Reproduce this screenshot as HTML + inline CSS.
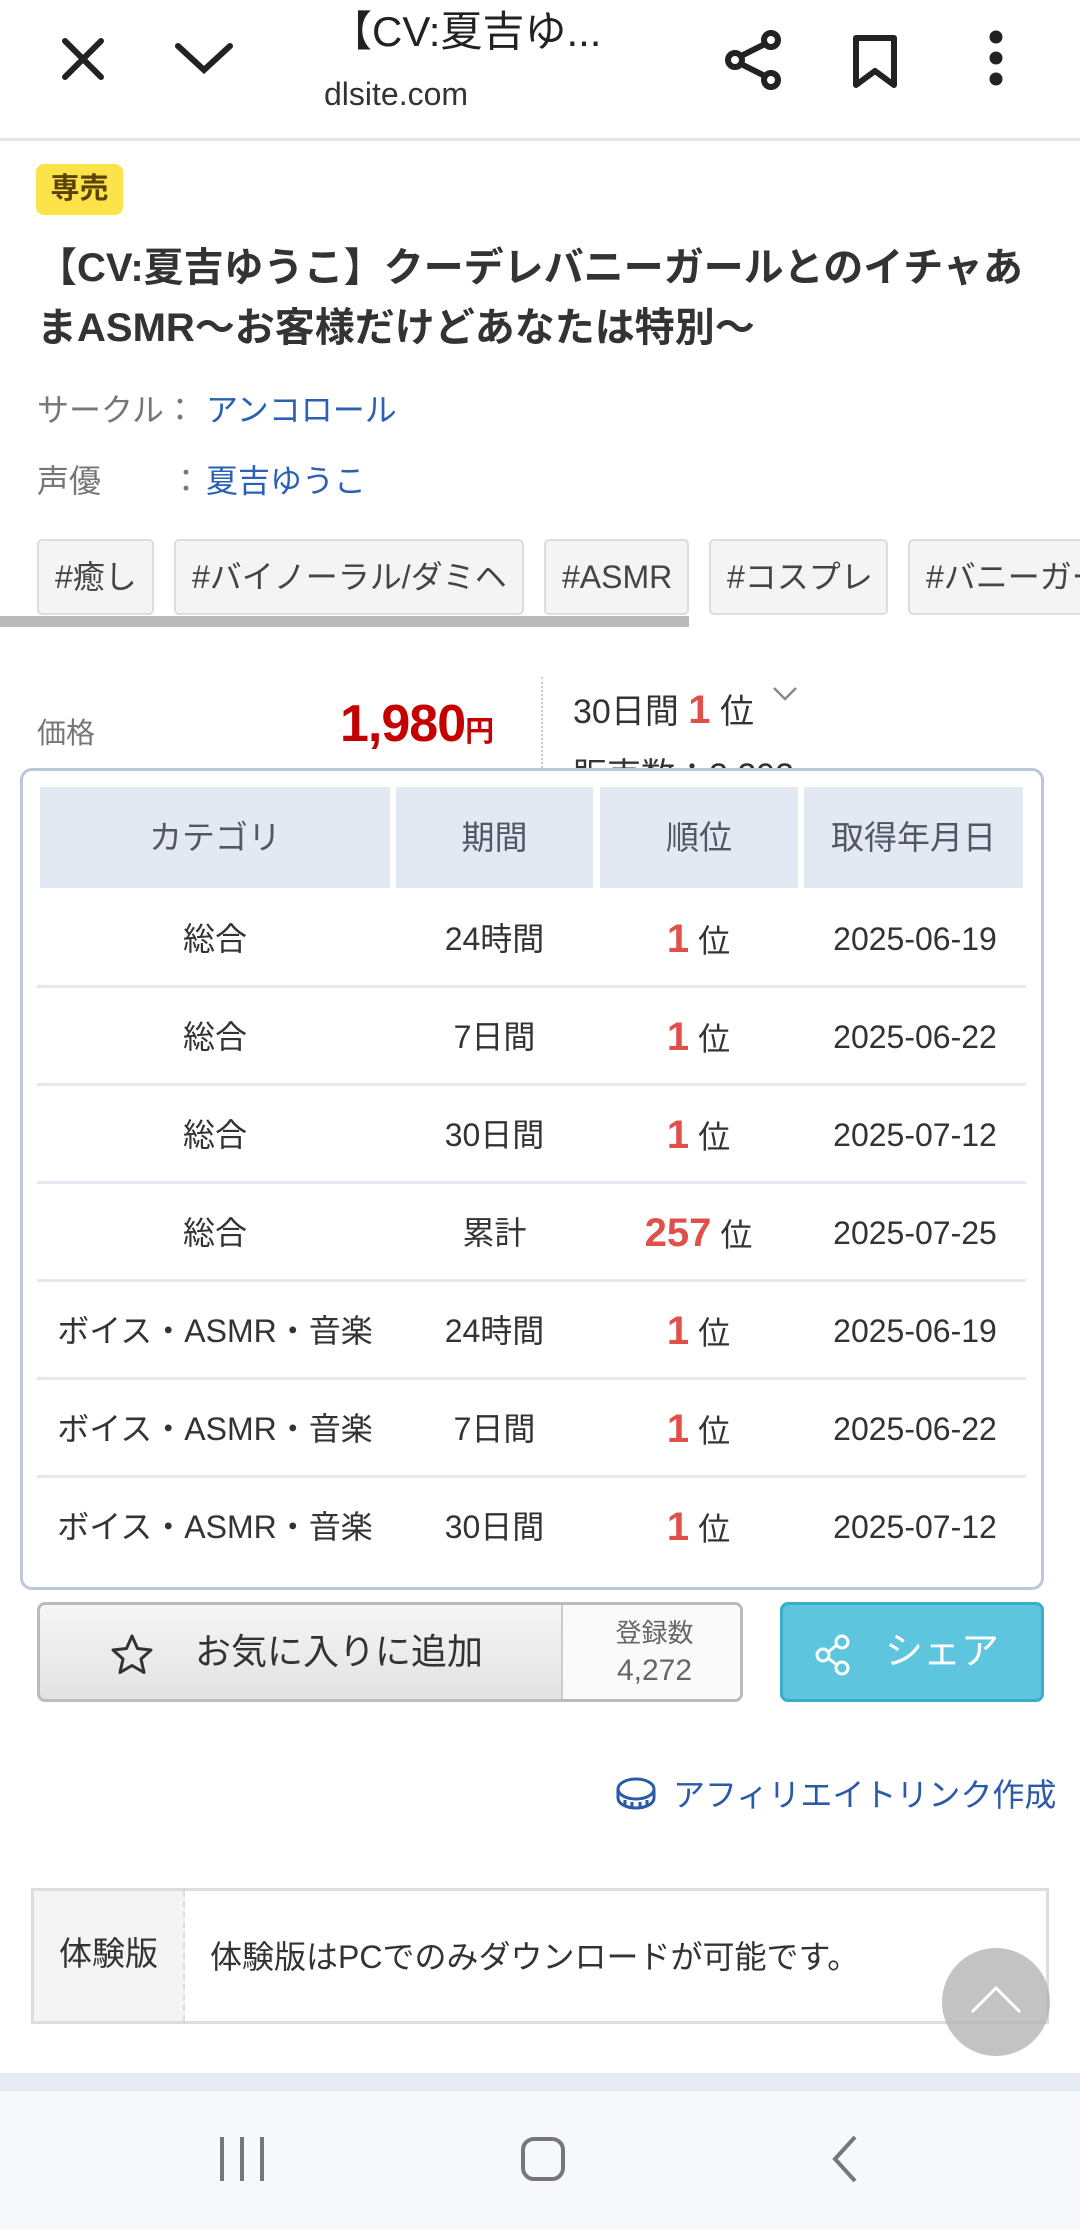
<!DOCTYPE html>
<html><head><meta charset="utf-8"><style>
*{margin:0;padding:0;box-sizing:border-box}
body{width:1080px;height:2230px;position:relative;background:#fff;font-family:"Liberation Sans","Noto Sans CJK JP",sans-serif;color:#333;overflow:hidden}
.a{position:absolute}
.tag{position:absolute;top:539px;height:76px;background:#f4f4f4;border:2px solid #ddd;border-radius:5px;font-size:32px;color:#444;line-height:72px;padding-left:16px;white-space:nowrap;overflow:hidden}
.row{position:absolute;left:37px;width:989px;height:98px;border-bottom:3px solid #e4e8f0;font-size:32px;color:#333}
.row div{position:absolute;top:0;line-height:98px;text-align:center;white-space:nowrap}
.c1{left:0;width:356px}.c2{left:359px;width:197px}.c3{left:562px;width:199px}.c4{left:767px;width:222px}
.r{color:#e0504a;font-weight:bold;font-size:40px}
.hd{position:absolute;top:787px;height:101px;background:#e3e9f3;color:#556;font-size:33px;line-height:101px;text-align:center}
</style></head><body>
<svg class="a" style="left:60px;top:36px" width="46" height="46" viewBox="0 0 46 46"><path d="M5 5L41 41M41 5L5 41" stroke="#222" stroke-width="6" stroke-linecap="round"/></svg>
<svg class="a" style="left:174px;top:40px" width="60" height="36" viewBox="0 0 60 36"><path d="M4 6L30 30L56 6" stroke="#222" stroke-width="6" fill="none" stroke-linecap="round"/></svg>
<div class="a" style="left:330px;top:6px;font-size:42px;color:#222;line-height:52px">【CV:夏吉ゆ...</div>
<div class="a" style="left:324px;top:74px;font-size:32px;color:#333;line-height:40px">dlsite.com</div>
<svg class="a" style="left:722px;top:28px" width="64" height="64" viewBox="0 0 64 64"><g stroke="#222" stroke-width="6" fill="none"><circle cx="49" cy="12" r="7"/><circle cx="13" cy="32" r="7"/><circle cx="49" cy="52" r="7"/><path d="M19 28L43 16M19 36L43 48"/></g></svg>
<svg class="a" style="left:851px;top:34px" width="48" height="56" viewBox="0 0 48 56"><path d="M5 4H43V51L24 37L5 51Z" stroke="#222" stroke-width="6" fill="none" stroke-linejoin="round"/></svg>
<svg class="a" style="left:983px;top:28px" width="26" height="60" viewBox="0 0 26 60"><circle cx="13" cy="9" r="6.5" fill="#222"/><circle cx="13" cy="30" r="6.5" fill="#222"/><circle cx="13" cy="51" r="6.5" fill="#222"/></svg>
<div class="a" style="left:0;top:138px;width:1080px;height:3px;background:#e2e5ea"></div>
<div class="a" style="left:36px;top:164px;width:87px;height:51px;background:#fce34a;border-radius:8px;font-size:29px;font-weight:bold;color:#5a4300;text-align:center;line-height:51px">専売</div>
<div class="a" style="left:37px;top:238px;width:1005px;font-size:40px;font-weight:bold;color:#333;line-height:60px">【CV:夏吉ゆうこ】クーデレバニーガールとのイチャあまASMR～お客様だけどあなたは特別～</div>
<div class="a" style="left:37px;top:388px;font-size:32px;color:#777;line-height:44px">サークル：</div>
<div class="a" style="left:206px;top:388px;font-size:32px;color:#2a60b5;line-height:44px">アンコロール</div>
<div class="a" style="left:37px;top:459px;font-size:32px;color:#777;line-height:44px">声優</div>
<div class="a" style="left:170px;top:459px;font-size:32px;color:#777;line-height:44px">：</div>
<div class="a" style="left:206px;top:459px;font-size:32px;color:#2a60b5;line-height:44px">夏吉ゆうこ</div>
<div class="tag" style="left:37px;width:117px">#癒し</div>
<div class="tag" style="left:174px;width:350px">#バイノーラル/ダミヘ</div>
<div class="tag" style="left:544px;width:145px">#ASMR</div>
<div class="tag" style="left:709px;width:179px">#コスプレ</div>
<div class="tag" style="left:908px;width:200px">#バニーガール</div>
<div class="a" style="left:0;top:616px;width:689px;height:11px;background:#bbb"></div>
<div class="a" style="left:37px;top:710px;font-size:29px;color:#777">価格</div>
<div class="a" style="left:340px;top:694px;font-size:52px;font-weight:bold;color:#c40000;letter-spacing:-1px">1,980<span style="font-size:29px">円</span></div>
<div class="a" style="left:541px;top:677px;height:95px;border-left:2px dotted #ccc"></div>
<div class="a" style="left:573px;top:684px;font-size:34px;color:#333">30日間 <b style="color:#e0504a;font-size:40px">1</b> 位</div>
<svg class="a" style="left:772px;top:686px" width="26" height="16" viewBox="0 0 26 16"><path d="M2 2L13 13L24 2" stroke="#888" stroke-width="2.5" fill="none"/></svg>
<div class="a" style="left:573px;top:748px;font-size:34px;color:#333">販売数：2,292</div>
<div class="a" style="left:20px;top:768px;width:1024px;height:822px;background:#fff;border:3px solid #bcc6dc;border-radius:12px"></div>
<div class="hd" style="left:40px;width:350px">カテゴリ</div>
<div class="hd" style="left:396px;width:197px">期間</div>
<div class="hd" style="left:600px;width:198px">順位</div>
<div class="hd" style="left:804px;width:219px">取得年月日</div>
<div class="row" style="top:890px"><div class="c1">総合</div><div class="c2">24時間</div><div class="c3"><span class="r">1</span> 位</div><div class="c4">2025-06-19</div></div>
<div class="row" style="top:988px"><div class="c1">総合</div><div class="c2">7日間</div><div class="c3"><span class="r">1</span> 位</div><div class="c4">2025-06-22</div></div>
<div class="row" style="top:1086px"><div class="c1">総合</div><div class="c2">30日間</div><div class="c3"><span class="r">1</span> 位</div><div class="c4">2025-07-12</div></div>
<div class="row" style="top:1184px"><div class="c1">総合</div><div class="c2">累計</div><div class="c3"><span class="r">257</span> 位</div><div class="c4">2025-07-25</div></div>
<div class="row" style="top:1282px"><div class="c1">ボイス・ASMR・音楽</div><div class="c2">24時間</div><div class="c3"><span class="r">1</span> 位</div><div class="c4">2025-06-19</div></div>
<div class="row" style="top:1380px"><div class="c1">ボイス・ASMR・音楽</div><div class="c2">7日間</div><div class="c3"><span class="r">1</span> 位</div><div class="c4">2025-06-22</div></div>
<div class="row" style="top:1478px;border-bottom:none"><div class="c1">ボイス・ASMR・音楽</div><div class="c2">30日間</div><div class="c3"><span class="r">1</span> 位</div><div class="c4">2025-07-12</div></div>
<div class="a" style="left:37px;top:1602px;width:706px;height:100px;border:3px solid #bbb;border-radius:8px;background:linear-gradient(#f6f6f6,#e2e2e2);overflow:hidden">
<div class="a" style="left:521px;top:0;width:185px;height:100px;background:#fafafa;border-left:2px solid #ccc;text-align:center;color:#666;font-size:26px;line-height:38px;padding-top:9px">登録数<br><span style="font-size:30px">4,272</span></div>
<svg class="a" style="left:70px;top:28px" width="44" height="42" viewBox="0 0 44 42"><path d="M22 3L27.5 15.5L41 17L31 26L34 39.5L22 32.5L10 39.5L13 26L3 17L16.5 15.5Z" stroke="#333" stroke-width="3" fill="none" stroke-linejoin="round"/></svg>
<div class="a" style="left:155px;top:0;line-height:94px;font-size:36px;color:#333">お気に入りに追加</div>
</div>
<div class="a" style="left:780px;top:1602px;width:264px;height:100px;border:3px solid #3aaec9;border-radius:8px;background:#5dc6de;color:#fff;font-size:38px;line-height:94px;padding-left:102px">シェア</div>
<svg class="a" style="left:814px;top:1634px" width="40" height="42" viewBox="0 0 40 42"><g stroke="#fff" stroke-width="3" fill="none"><circle cx="28" cy="8" r="6"/><circle cx="9" cy="21" r="6"/><circle cx="28" cy="34" r="6"/><path d="M14 18L23 11M14 24L23 31"/></g></svg>
<svg class="a" style="left:615px;top:1776px" width="42" height="36" viewBox="0 0 42 36"><g stroke="#2a5aa8" stroke-width="3" fill="none"><ellipse cx="21" cy="13" rx="18" ry="10"/><path d="M3 13V22C3 28 12 32 21 32C30 32 39 28 39 22V13M10 24V31M17 26V32M25 26V32M32 24V31"/></g></svg>
<div class="a" style="left:673px;top:1770px;font-size:32px;color:#2a5aa8">アフィリエイトリンク作成</div>
<div class="a" style="left:31px;top:1888px;width:1018px;height:136px;border:3px solid #ddd"></div>
<div class="a" style="left:34px;top:1891px;width:151px;height:130px;background:#f4f4f4;border-right:2px dashed #ddd;font-size:33px;color:#333;line-height:126px;text-align:center">体験版</div>
<div class="a" style="left:210px;top:1932px;font-size:32px;color:#333">体験版はPCでのみダウンロードが可能です。</div>
<div class="a" style="left:942px;top:1948px;width:108px;height:108px;border-radius:50%;background:rgba(180,180,180,0.8)"></div>
<svg class="a" style="left:968px;top:1982px" width="56" height="36" viewBox="0 0 56 36"><path d="M4 30L28 6L52 30" stroke="#fff" stroke-width="3" fill="none"/></svg>
<div class="a" style="left:0;top:2073px;width:1080px;height:18px;background:#e6eaf3"></div>
<div class="a" style="left:0;top:2091px;width:1080px;height:139px;background:#f7f8fc"></div>
<svg class="a" style="left:218px;top:2134px" width="48" height="50" viewBox="0 0 48 50"><path d="M4 3V47M24 3V47M44 3V47" stroke="#777" stroke-width="4"/></svg>
<div class="a" style="left:521px;top:2137px;width:44px;height:44px;border:4px solid #777;border-radius:13px"></div>
<svg class="a" style="left:830px;top:2134px" width="30" height="50" viewBox="0 0 30 50"><path d="M25 3L5 25L25 47" stroke="#777" stroke-width="4" fill="none"/></svg>
</body></html>
